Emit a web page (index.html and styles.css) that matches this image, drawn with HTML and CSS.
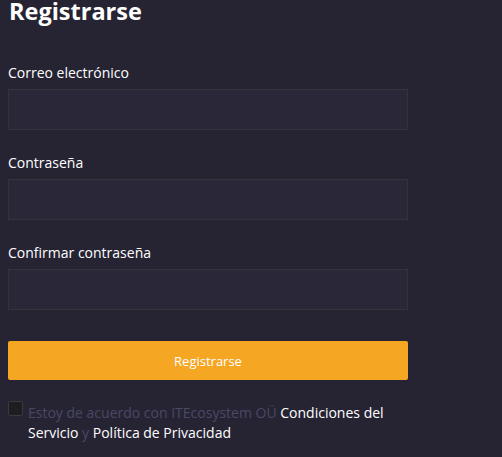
FILE: index.html
```html
<!DOCTYPE html>
<html lang="es">
<head>
<meta charset="utf-8">
<title>Registrarse</title>
<link rel="stylesheet" href="styles.css">
</head>
<body>
<main class="form">
  <h1 class="title">Registrarse</h1>
  <div class="field">
    <label class="label" for="email">Correo electrónico</label>
    <input class="input" id="email" type="email">
  </div>
  <div class="field">
    <label class="label" for="pass">Contraseña</label>
    <input class="input" id="pass" type="password">
  </div>
  <div class="field">
    <label class="label" for="pass2">Confirmar contraseña</label>
    <input class="input" id="pass2" type="password">
  </div>
  <button class="btn" type="button">Registrarse</button>
  <div class="agree">
    <input class="check" type="checkbox" id="agree">
    <p class="agree-text"><span class="muted">Estoy de acuerdo con ITEcosystem OÜ</span> <a class="link">Condiciones del Servicio</a> <span class="muted">y</span> <a class="link">Política de Privacidad</a></p>
  </div>
</main>
</body>
</html>
```
FILE: styles.css
```css
html, body {
  margin: 0;
  padding: 0;
  background: #262433;
}
body {
  font-family: "Open Sans", "Liberation Sans", sans-serif;
  color: #ffffff;
}
.form {
  width: 400px;
  padding: 0 8px;
}
.title {
  margin: 0;
  font-size: 23.5px;
  line-height: 22px;
  font-weight: 700;
  margin-bottom: 41px;
  padding-left: 1px;
}
.field {
  display: flex;
  flex-direction: column;
  margin-bottom: 23px;
}
.label {
  font-size: 14px;
  line-height: 20px;
  margin-bottom: 6px;
}
.input {
  box-sizing: border-box;
  height: 41px;
  width: 400px;
  margin: 0;
  background: #2a2838;
  border: 1px solid #34333b;
  border-radius: 0;
  outline: none;
  color: #fff;
}
.btn {
  display: block;
  box-sizing: border-box;
  width: 400px;
  height: 39px;
  margin: 31px 0 0;
  border: none;
  border-radius: 2px;
  background: #f5a623;
  color: #ffffff;
  font-family: "Open Sans", "Liberation Sans", sans-serif;
  font-size: 13px;
}
.agree {
  display: flex;
  gap: 5px;
  margin-top: 21px;
}
.check {
  appearance: none;
  -webkit-appearance: none;
  flex: none;
  box-sizing: border-box;
  width: 15px;
  height: 15px;
  margin: 0;
  background: #1e1e21;
  border: 1px solid #3a3a40;
  border-radius: 2px;
}
.agree-text {
  margin: 2px 0 0;
  font-size: 14px;
  line-height: 20px;
}
.muted {
  color: #4a4864;
}
.link {
  color: #ffffff;
}
```
